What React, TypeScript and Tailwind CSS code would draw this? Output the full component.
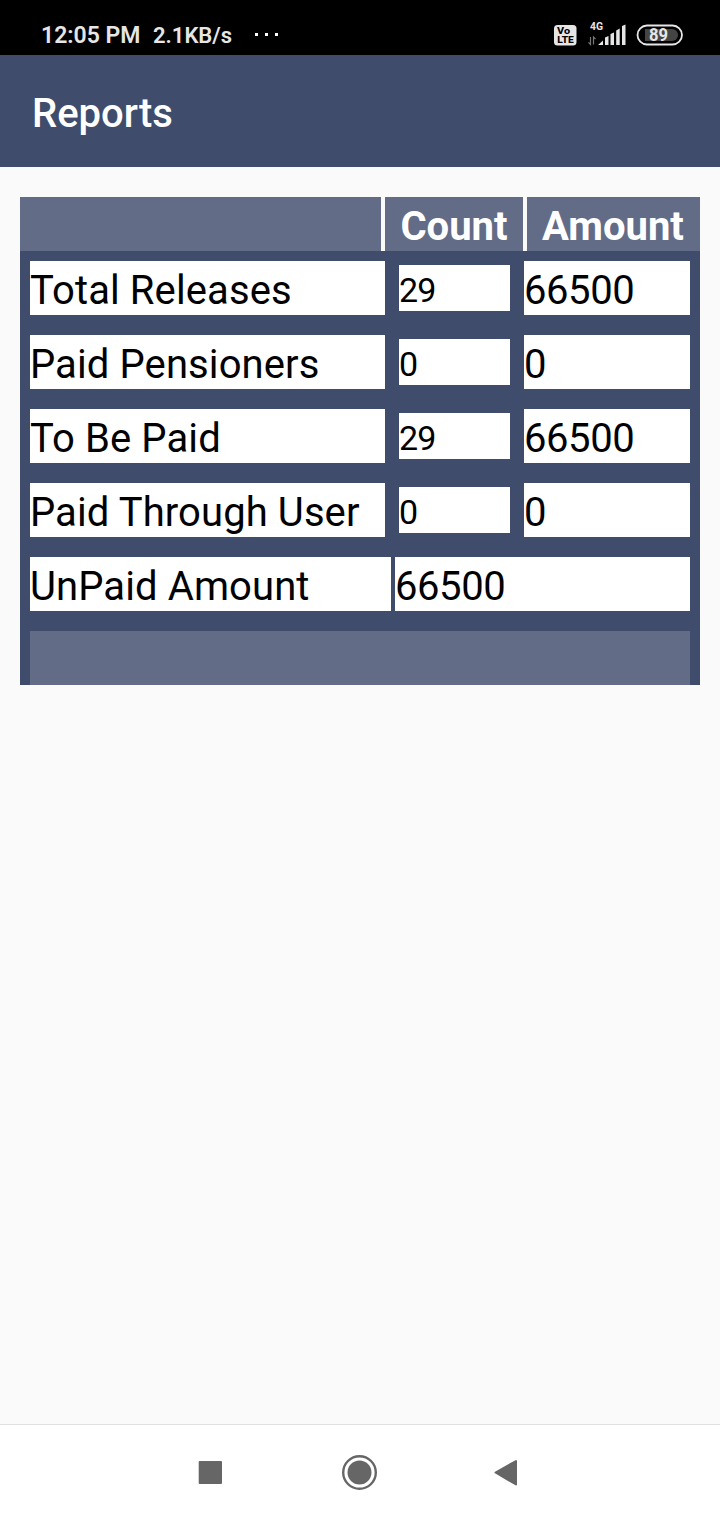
const rows = [
  { label: "Total Releases", count: "29", amount: "66500" },
  { label: "Paid Pensioners", count: "0", amount: "0" },
  { label: "To Be Paid", count: "29", amount: "66500" },
  { label: "Paid Through User", count: "0", amount: "0" },
];

function StatusIcons() {
  return (
    <svg width="132" height="32" viewBox="552 18 132 32" className="ml-auto" fontFamily="Roboto, sans-serif">
      <rect x="554" y="25" width="22.5" height="20.5" rx="3.5" fill="#e6e6e6" />
      <text x="557" y="34.2" fontSize="9.5" fontWeight="800" fill="#000" textLength="13" lengthAdjust="spacingAndGlyphs">Vo</text>
      <text x="557.3" y="43" fontSize="9.5" fontWeight="800" fill="#000" textLength="16.5" lengthAdjust="spacingAndGlyphs">LTE</text>
      <text x="590" y="30" fontSize="10" fontWeight="700" fill="#e6e6e6" textLength="13" lengthAdjust="spacingAndGlyphs">4G</text>
      <path d="M590.5 37v7.5l-2-2.2M593.5 44.5V37l2 2.2" fill="none" stroke="#777" strokeWidth="1.2" />
      <path d="M598 45l5-4.5V45zM605 37.5l3.5-1.5v9H605zM610.5 34l3.5-1.5V45h-3.5zM616.2 30.5l3.5-2V45h-3.5zM622 26l3.5-1.5V45H622z" fill="#e6e6e6" />
      <rect x="637.5" y="25.5" width="44.5" height="19" rx="9.5" fill="#000" stroke="#e6e6e6" strokeWidth="1.8" />
      <path d="M645 29h27a6 6 0 0 1 0 12h-27z" fill="#444" />
      <text x="649" y="41.3" fontSize="18" fontWeight="700" fill="#e6e6e6" textLength="19" lengthAdjust="spacingAndGlyphs">89</text>
    </svg>
  );
}

export default function App() {
  return (
    <div className="flex h-[1520px] w-[720px] flex-col bg-[#fafafa] font-['Roboto',sans-serif] text-black">
      <div className="flex h-[55px] items-center bg-black pr-9 pl-[41px] pt-[15px] text-[22px] font-semibold text-[#e6e6e6]">
        <span className="w-[112px] shrink-0 whitespace-nowrap pt-0.5 text-[23px]">12:05 PM</span>
        <span className="w-[101px] shrink-0 whitespace-nowrap">2.1KB/s</span>
        <span className="-mt-0.5 flex gap-[7px] pl-px">
          <i className="size-[3px] bg-white" />
          <i className="size-[3px] bg-white" />
          <i className="size-[3px] bg-white" />
        </span>
        <div className="-mt-0.5 ml-auto">
          <StatusIcons />
        </div>
      </div>
      <header className="flex h-28 items-center bg-[#404c6b] pl-8 pt-1.5 text-[40px] font-medium text-white">
        <h1>Reports</h1>
      </header>
      <main className="flex-1 px-5 pt-[30px] text-[40px] leading-[54px]">
        <div className="flex h-[54px] gap-1 text-center font-bold text-white">
          <div className="w-[361px] bg-[#626c87]" />
          <div className="w-[138px] bg-[#626c87] pt-[3px]">Count</div>
          <div className="w-[173px] bg-[#626c87] pt-[3px] pr-px">Amount</div>
        </div>
        <div className="flex flex-col gap-5 bg-[#404c6b] px-2.5 pt-2.5">
          {rows.map((row) => (
            <div key={row.label} className="flex h-[54px] items-center gap-3.5">
              <div className="h-[54px] w-[355px] whitespace-nowrap bg-white pt-[3px] tracking-[0.1px]">{row.label}</div>
              <div className="h-[46px] w-[111px] bg-white pt-0.5 text-[34px] leading-[46px] tracking-[-0.8px]">{row.count}</div>
              <div className="h-[54px] w-[166px] bg-white pt-[3px] tracking-[-0.42px]">{row.amount}</div>
            </div>
          ))}
          <div className="flex h-[54px] gap-1">
            <div className="w-[361px] bg-white pt-[3px] tracking-[0.1px]">UnPaid Amount</div>
            <div className="w-[295px] bg-white pt-[3px] tracking-[-0.42px]">66500</div>
          </div>
          <div className="h-[54px] bg-[#626c87]" />
        </div>
      </main>
      <nav className="h-24 border-t border-[#e0e0e0] bg-white">
        <svg width="720" height="95" viewBox="0 1425 720 95" fill="#666">
          <rect x="198.7" y="1461" width="23.3" height="23" rx="1" />
          <circle cx="359.5" cy="1472.5" r="16.3" fill="none" stroke="#666" strokeWidth="2.4" />
          <circle cx="359.5" cy="1472.5" r="12" />
          <path d="M495.5 1472.5L516 1461v23.5z" stroke="#666" strokeWidth="2" strokeLinejoin="round" />
        </svg>
      </nav>
    </div>
  );
}
